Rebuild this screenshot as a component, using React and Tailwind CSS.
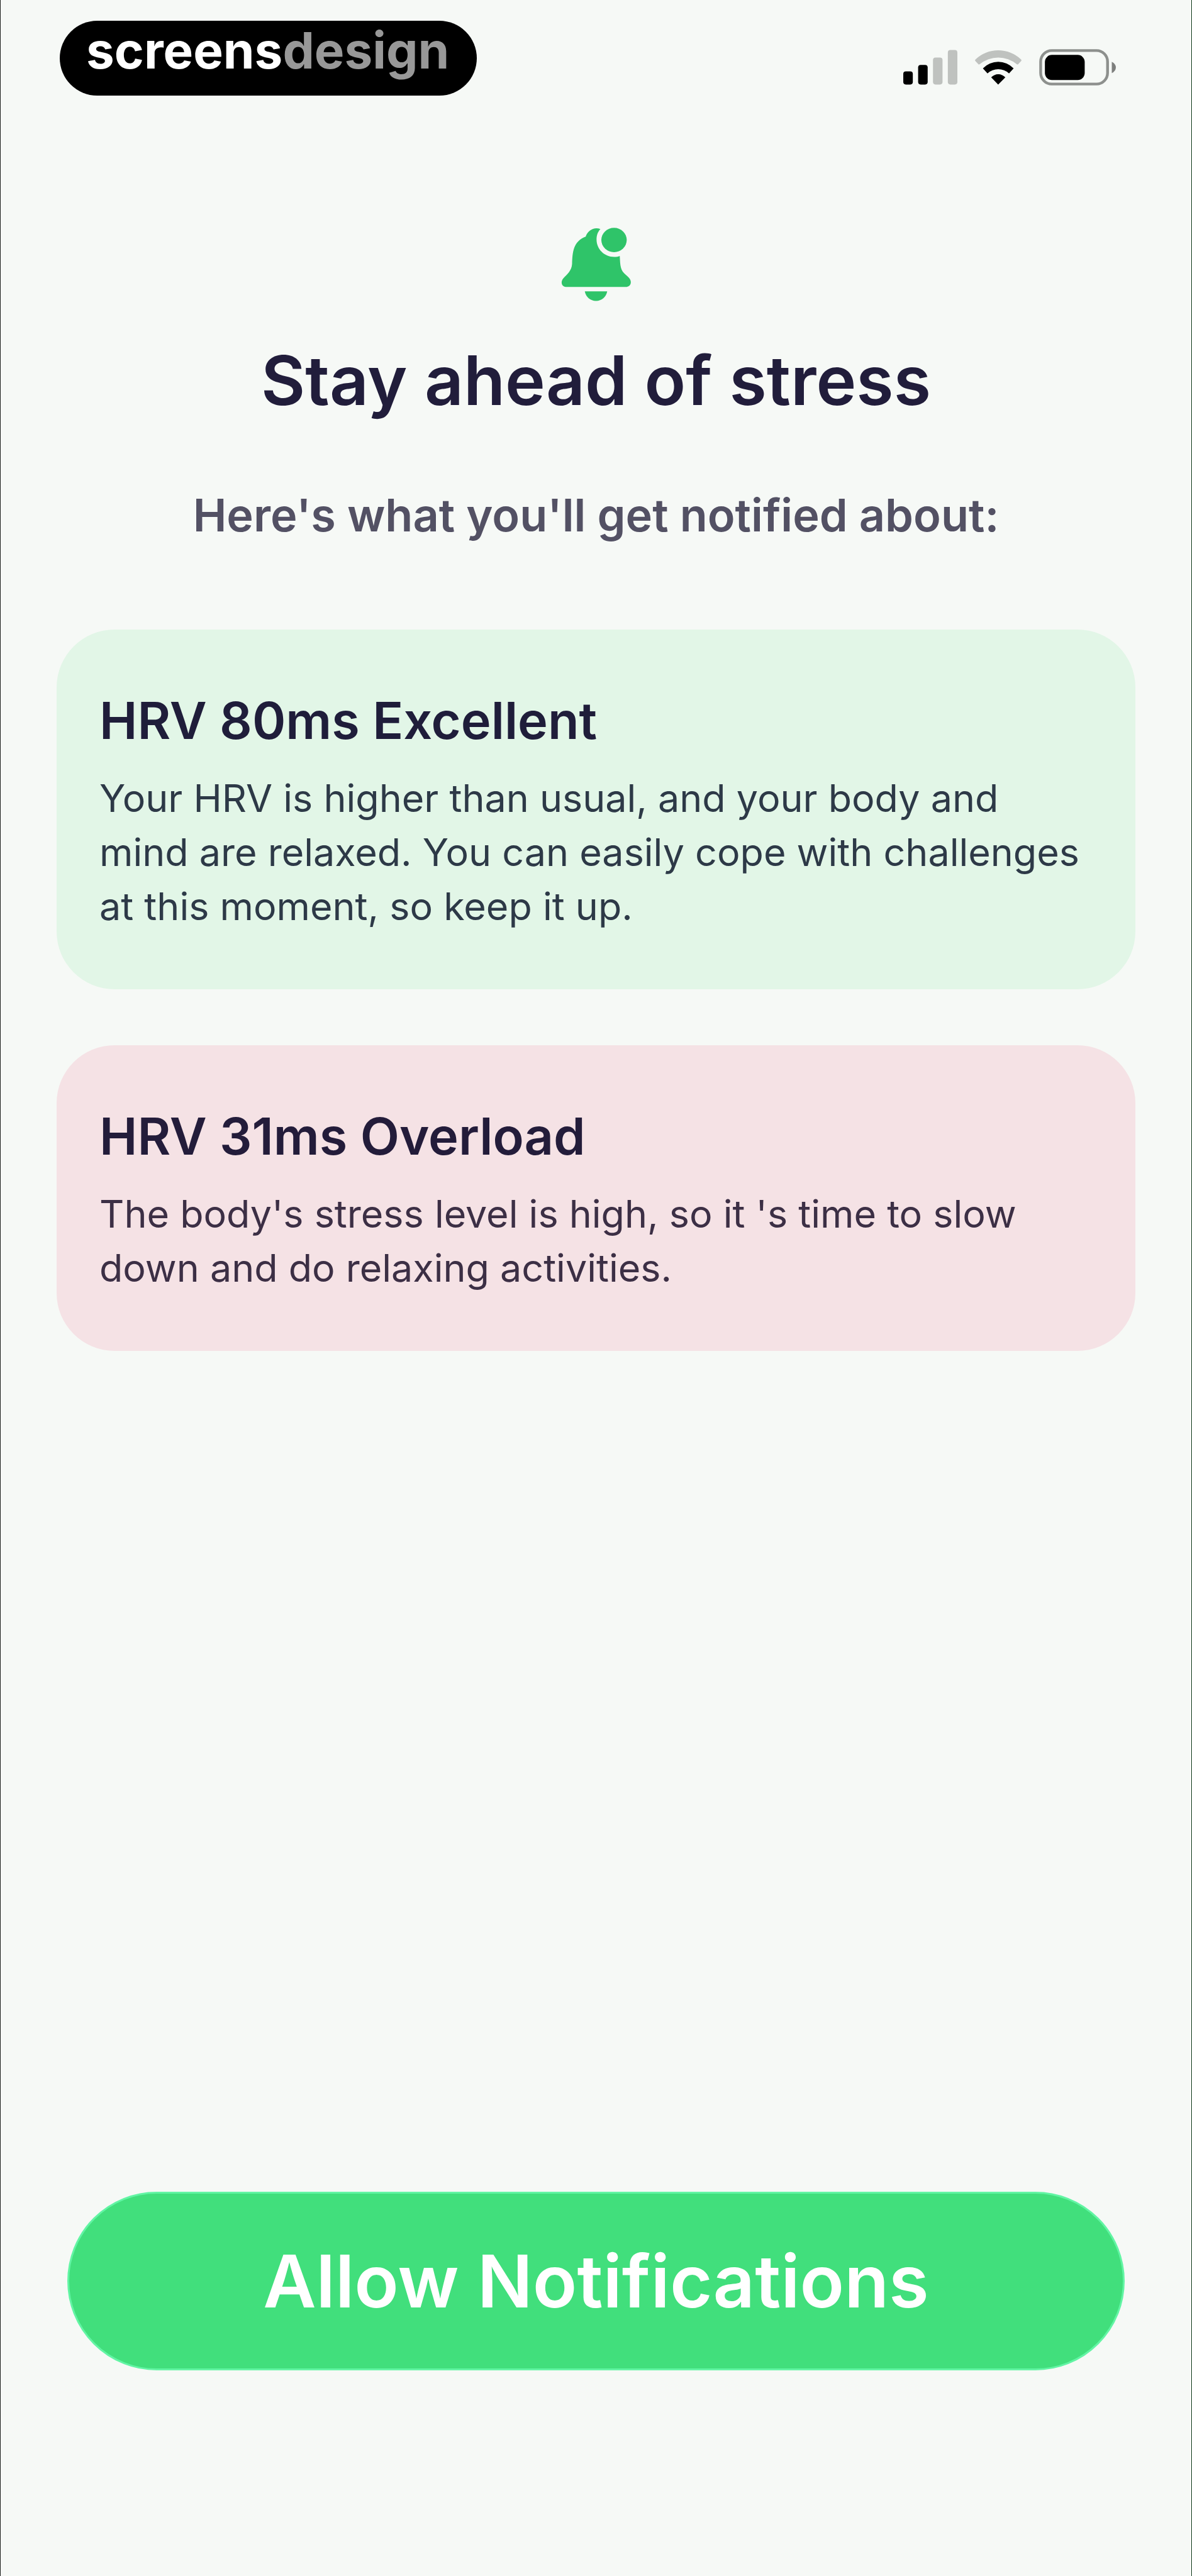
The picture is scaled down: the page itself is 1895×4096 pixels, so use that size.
function Logo() {
  return (
    <div className="rounded-full bg-black pr-[44px] pb-[25px] pl-[42px] text-[80px] leading-[94px] font-bold text-white">
      screens<span className="text-[#989898]">design</span>
    </div>
  );
}

function StatusIcons() {
  return (
    <div className="flex gap-[28px] pb-4">
      <svg className="h-[58px] w-[86px]" viewBox="108 86 295 198" role="img" aria-label="Signal strength">
        <rect x="108" y="207" width="52" height="72" rx="14" />
        <rect x="189" y="172" width="52" height="107" rx="14" />
        <rect x="270" y="132" width="52" height="147" rx="14" fill="#bfc2bf" />
        <rect x="351" y="91" width="52" height="188" rx="14" fill="#bfc2bf" />
      </svg>
      <svg className="h-[58px] w-[74px]" viewBox="500 86 253 198" role="img" aria-label="Wi-Fi">
        <path
          d="M502 151Q498 146 503 142A180 180 0 0 1 750 142Q755 146 751 151L735 168Q731 172 727 168A158 158 0 0 0 526 168Q521 172 518 168Z"
          fill="#bfc2bf"
        />
        <path d="M543 191A115 115 0 0 1 710 191L685 218A87 87 0 0 0 568 218Z" />
        <path d="M588 240A52 52 0 0 1 665 240L626 279Z" />
      </svg>
      <svg className="h-[58px] w-[122px]" viewBox="850 86 416 198" role="img" aria-label="Battery">
        <rect x="858" y="94" width="363" height="182" rx="60" fill="none" stroke="#8d908d" strokeWidth="15" />
        <rect x="881" y="118" width="216" height="136" rx="38" />
        <path d="M1244 155Q1266 166 1266 186T1244 217Z" fill="#7d7f7d" />
      </svg>
    </div>
  );
}

function BellIcon() {
  return (
    <svg className="h-[117px] w-[111px]" viewBox="110 67 378 400" fill="#2fc469" aria-hidden="true">
      <path d="M135 389C112 387 105 362 121 343C141 322 167 302 169 264C171 204 174 141 243 116C253 82 290 61 323 75C309 89 302 109 302 132C302 183 344 226 398 226C410 226 420 225 428 221C431 258 428 290 452 315C463 326 474 333 481 343C495 362 488 387 466 389Z" />
      <path d="M238 413H360C354 444 330 465 299 465C268 465 244 444 238 413Z" />
      <ellipse cx="397" cy="134" rx="69" ry="66" />
    </svg>
  );
}

const notices = [
  {
    title: "HRV 80ms Excellent",
    body: "Your HRV is higher than usual, and your body and mind are relaxed. You can easily cope with challenges at this moment, so keep it up.",
    box: "bg-[#e2f6e7]",
    heading: "text-[#1f1d3a]",
    text: "text-[#2d3947]",
  },
  {
    title: "HRV 31ms Overload",
    body: "The body's stress level is high, so it 's time to slow down and do relaxing activities.",
    box: "bg-[#f5e2e5]",
    heading: "text-[#231c3a]",
    text: "text-[#3c2f45]",
  },
];

function NoticeCard({ title, body, box, heading, text }) {
  return (
    <article className={`rounded-[92px] px-[68px] pt-[95px] pb-[89px] ${box}`}>
      <h2 className={`text-[81px] leading-[100px] font-semibold ${heading}`}>{title}</h2>
      <p className={`mt-[30px] text-[61px] leading-[86px] ${text}`}>{body}</p>
    </article>
  );
}

export default function App() {
  return (
    <div className="flex min-h-screen flex-col border-x border-r-[#0f3a1a] border-l-[#1d1f1d] bg-[#f6f9f6] font-['Inter',sans-serif]">
      <header className="flex items-end justify-between pt-[33px] pr-[120px] pl-[94px]">
        <Logo />
        <StatusIcons />
      </header>
      <main className="flex flex-1 flex-col px-[89px] pt-[210px] pb-[327px]">
        <div className="flex flex-col items-center text-center">
          <BellIcon />
          <h1 className="mt-[61px] text-[108px] leading-[130px] font-semibold text-[#211d3b]">Stay ahead of stress</h1>
          <p className="mt-[105px] text-[72px] leading-[88px] font-semibold text-[#535164]">
            Here's what you'll get notified about:
          </p>
        </div>
        <section className="mt-[138px] flex flex-col gap-[89px]" aria-label="Notification examples">
          {notices.map((n) => (
            <NoticeCard key={n.title} {...n} />
          ))}
        </section>
        <button
          type="button"
          className="mx-[17px] mt-auto h-[284px] rounded-full border-[3px] border-[#62f5a4] bg-[#41df7c] text-[116px] font-semibold text-white"
        >
          Allow Notifications
        </button>
      </main>
    </div>
  );
}
